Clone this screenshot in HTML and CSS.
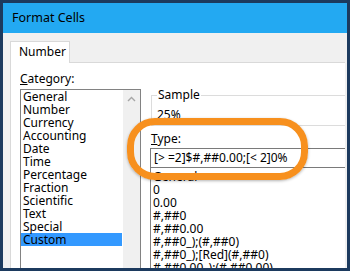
FILE: index.html
```html
<!DOCTYPE html>
<html lang="en">
<head>
    <meta charset="UTF-8">
    <title>Format Cells</title>
    <link rel="stylesheet" href="styles.css">
</head>
<body>

    <div class="window">

        <div class="titlebar">Format Cells</div>

        <div class="dialog">

            <div class="tabs">
                <div class="tab">Number</div>
            </div>

            <div class="panel">

                <div class="col-left">
                    <div class="label"><u>C</u>ategory:</div>
                    <div class="listbox">
                        <div class="items">
                            <div class="item">General</div>
                            <div class="item">Number</div>
                            <div class="item">Currency</div>
                            <div class="item">Accounting</div>
                            <div class="item">Date</div>
                            <div class="item">Time</div>
                            <div class="item">Percentage</div>
                            <div class="item">Fraction</div>
                            <div class="item">Scientific</div>
                            <div class="item">Text</div>
                            <div class="item">Special</div>
                            <div class="item selected">Custom</div>
                        </div>
                        <div class="scrollbar">
                            <svg width="17" height="14" viewBox="0 0 17 14">
                                <path d="M5 9 L8.5 5.5 L12 9" fill="none" stroke="#a6a6a6" stroke-width="1.4"/>
                            </svg>
                        </div>
                    </div>
                </div>

                <div class="col-right">
                    <fieldset class="sample">
                        <legend>Sample</legend>
                        <div class="sample-value">25%</div>
                    </fieldset>

                    <div class="label type-label"><u>T</u>ype:</div>
                    <div class="type-input">[&gt; =2]$#,##0.00;[&lt; 2]0%</div>

                    <div class="type-list">
                        <div class="item">General</div>
                        <div class="item">0</div>
                        <div class="item">0.00</div>
                        <div class="item">#,##0</div>
                        <div class="item">#,##0.00</div>
                        <div class="item">#,##0_);(#,##0)</div>
                        <div class="item">#,##0_);[Red](#,##0)</div>
                        <div class="item">#,##0.00_);(#,##0.00)</div>
                    </div>
                </div>

                <!-- orange callout round the Type box -->
                <div class="callout"></div>

            </div>

        </div>

    </div>

</body>
</html>
```

FILE: styles.css
```css
*, *::before, *::after {
    margin: 0;
    padding: 0;
    box-sizing: border-box;
}

body {
    width: 350px;
    height: 271px;
    overflow: hidden;
    font-family: "Noto Sans", "Open Sans", sans-serif;
    font-size: 12px;
    color: #000;
}

.window {
    width: 350px;
    height: 271px;
    border: 3px solid #1c3a5e;
    display: flex;
    flex-direction: column;
    overflow: hidden;
}

.titlebar {
    height: 30px;
    line-height: 30px;
    padding-left: 9px;
    background-color: #23a9f2;
    font-size: 12.5px;
}

.dialog {
    flex: 1;
    background-color: #f0f0f0;
    padding: 8px 2px 0 7px;
    display: flex;
    flex-direction: column;
    min-height: 0;
}

.tabs {
    display: flex;
    border-bottom: 1px solid #d9d9d9;
    height: 22px;
}

.tab {
    width: 60px;
    height: 22px;
    line-height: 20px;
    padding-left: 8px;
    background-color: #fff;
    border: 1px solid #d9d9d9;
    border-bottom: none;
    position: relative;
    z-index: 1;
}

.panel {
    flex: 1;
    position: relative;
    background-color: #fff;
    border-left: 1px solid #d9d9d9;
    padding: 8px 0 0 9px;
    display: flex;
    gap: 9px;
    overflow: hidden;
}

.label {
    line-height: 16px;
}

.col-left {
    width: 121px;
    flex-shrink: 0;
}

.listbox {
    margin-top: 2px;
    height: 190px;
    border: 1px solid #828282;
    display: flex;
    gap: 1px;
}

.items {
    width: 101px;
}

.item {
    height: 13px;
    line-height: 13px;
    padding-left: 2px;
    white-space: nowrap;
}

.selected {
    background-color: #3399ff;
}

.scrollbar {
    width: 17px;
    background-color: #f0f0f0;
    padding-top: 2px;
}

.scrollbar svg {
    display: block;
}

.col-right {
    width: 230px;
    flex-shrink: 0;
}

.sample {
    margin: 16px 0 0 1px;
    height: 39px;
    border: 1px solid #dcdcdc;
    padding: 0 0 0 5px;
}

.sample legend {
    line-height: 16px;
    padding: 0 1px;
}

.sample-value {
    line-height: 16px;
    padding-top: 4px;
}

.type-label {
    margin: 5px 0 1px 1px;
}

.type-input {
    height: 20px;
    line-height: 18px;
    border: 1px solid #7a7a7a;
    padding-left: 3px;
    white-space: nowrap;
}

.type-list {
    height: 120px;
    border: 1px solid #828282;
    border-top: none;
    padding-top: 2px;
}

.callout {
    position: absolute;
    left: 116px;
    top: 55px;
    width: 181px;
    height: 62px;
    border: 7px solid #f7901e;
    border-radius: 28px;
    box-shadow: 0 1px 3px rgba(0, 0, 0, 0.3);
}
```
